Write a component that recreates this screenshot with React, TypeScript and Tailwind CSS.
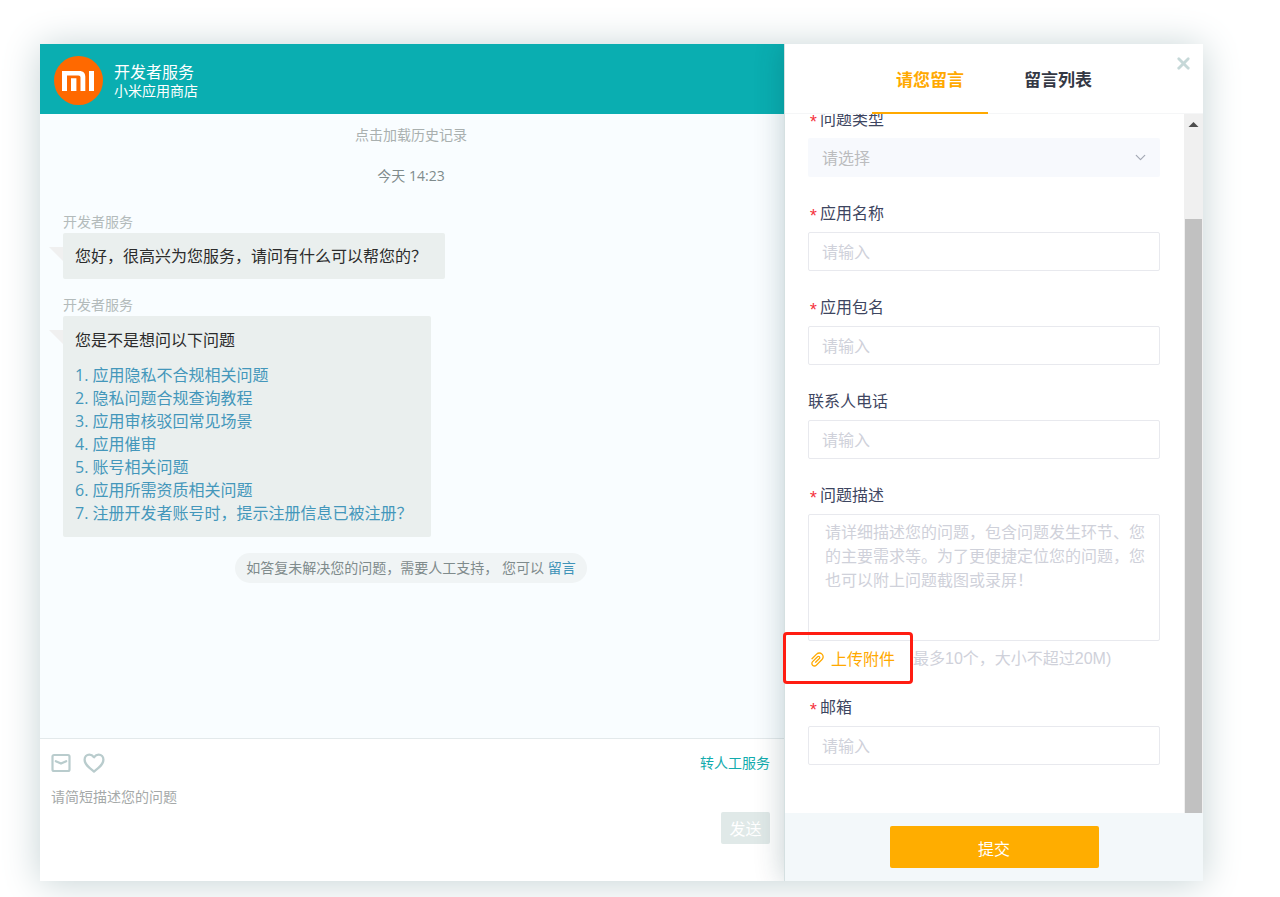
import React from "react"
import { ChevronDown, X } from "lucide-react"
import { AiOutlinePaperClip } from "react-icons/ai"

const questions = [
  "应用隐私不合规相关问题",
  "隐私问题合规查询教程",
  "应用审核驳回常见场景",
  "应用催审",
  "账号相关问题",
  "应用所需资质相关问题",
  "注册开发者账号时，提示注册信息已被注册？",
]

const MiLogo = () => (
  <svg width="49" height="49" viewBox="0 0 49 49" aria-hidden="true">
    <circle cx="24.5" cy="24.5" r="24.5" fill="#ff6900" />
    <path
      fill="#fff"
      d="M8 15h17.5c3.7 0 5.8 2.1 5.8 5.8V35h-4.8V21.6c0-1.5-.7-2.2-2.2-2.2H13V35H8zM17 22.2h5.4V35H17zM35 15h5v20h-5z"
    />
  </svg>
)

const MailIcon = () => (
  <svg width="20" height="20" viewBox="0 0 20 20" fill="none" stroke="#b9cccd" strokeWidth="2.2">
    <rect x="1.5" y="2" width="17" height="16" rx="1.5" />
    <path d="M4.8 8.2L10 10.6l5.2-2.4" strokeLinecap="round" strokeLinejoin="round" />
  </svg>
)

const HeartIcon = () => (
  <svg width="22" height="20" viewBox="0 0 22 20" fill="none" stroke="#b9cccd" strokeWidth="2.3">
    <path
      d="M11 4.2C9.6 2.4 8.1 1.6 6.4 1.6c-2.8 0-4.8 2.2-4.8 5.1 0 4.8 4.7 8 9.4 11.8 4.7-3.8 9.4-7 9.4-11.8 0-2.9-2-5.1-4.8-5.1-1.7 0-3.2.8-4.6 2.6z"
      strokeLinejoin="round"
    />
  </svg>
)

const Message = ({ children }: { children: React.ReactNode }) => (
  <div className="flex flex-col items-start">
    <p className="text-sm leading-[22px] text-[#b3bbbb]">开发者服务</p>
    <div className="relative rounded-xs bg-[#eaefee] py-3 pr-[18px] pl-3 text-base leading-[22px] text-[#2b2b2b]">
      <svg className="absolute top-3.5 -left-3.5" width="14" height="14" viewBox="0 0 14 14">
        <path d="M0 0h14v14z" fill="#f0f0f0" />
      </svg>
      {children}
    </div>
  </div>
)

const Label = ({ id, text, required }: { id: string; text: string; required?: boolean }) => (
  <label htmlFor={id} className="mb-[7px] flex h-6 gap-0.5 leading-6 text-[#3d4560]">
    {required && (
      <span className="w-2.5 font-['Liberation_Mono',monospace] text-lg leading-8 text-[#f5323d]">*</span>
    )}
    {text}
  </label>
)

const TextField = ({ id, text, required }: { id: string; text: string; required?: boolean }) => (
  <div>
    <Label id={id} text={text} required={required} />
    <input
      id={id}
      type="text"
      placeholder="请输入"
      className="block h-[39px] w-full rounded-xs border border-[#e8e9ee] px-[13px] outline-none placeholder:text-[#cfd1da]"
    />
  </div>
)

const ChatPane = () => {
  return (
    <main className="flex min-w-0 flex-1 flex-col">
      <header className="flex h-[70px] items-center gap-[11px] bg-[#0aaeb1] pt-0.5 pl-3.5 text-white">
        <MiLogo />
        <div className="pt-0.5">
          <h1 className="text-base leading-5">开发者服务</h1>
          <p className="text-sm leading-[18px]">小米应用商店</p>
        </div>
      </header>

      <section className="flex-1 bg-[#f9fdff] pt-2.5 pr-0.5 pb-6 pl-[23px]">
        <div className="-ml-[23px] flex flex-col items-center gap-[19px] text-sm leading-[22px]">
          <button className="text-[#a9b0af]">点击加载历史记录</button>
          <p className="text-[#7f8b8c]">今天 14:23</p>
        </div>
        <div className="mt-6 flex flex-col gap-[15px]">
          <Message>您好，很高兴为您服务，请问有什么可以帮您的？</Message>
          <Message>
            <p className="mb-3 leading-6">您是不是想问以下问题</p>
            <ol className="leading-[23px] text-[#4497bb]">
              {questions.map((question, i) => (
                <li key={question}>
                  <a href="#">
                    {i + 1}. {question}
                  </a>
                </li>
              ))}
            </ol>
          </Message>
        </div>
        <div className="mt-4 -ml-[23px] flex justify-center">
          <p className="rounded-full bg-[#f0f4f5] px-[11px] text-sm leading-[30px] text-[#7f8b8c]">
            如答复未解决您的问题，需要人工支持， 您可以{" "}
            <a href="#" className="text-[#3f93b8]">
              留言
            </a>
          </p>
        </div>
      </section>

      <footer className="h-[143px] border-t border-[#e3e9eb] bg-white pt-[13px] pr-3.5 pl-[11px]">
        <div className="flex h-[22px] items-center gap-3 text-sm">
          <button aria-label="消息">
            <MailIcon />
          </button>
          <button aria-label="评价">
            <HeartIcon />
          </button>
          <button className="ml-auto text-[#12abad]">转人工服务</button>
        </div>
        <textarea
          aria-label="请简短描述您的问题"
          placeholder="请简短描述您的问题"
          className="mt-3 block h-[22px] w-full resize-none text-sm leading-[22px] outline-none placeholder:text-[#a5a9a9]"
        />
        <div className="mt-1 flex justify-end">
          <button className="h-8 w-[49px] rounded-xs bg-[#e0e9e8] pt-0.5 text-white">发送</button>
        </div>
      </footer>
    </main>
  )
}

const MessagePanel = () => {
  return (
    <aside className="relative flex w-[419px] shrink-0 flex-col border-l border-[#d5e0e1] bg-white shadow-[0_0_28px_rgba(0,50,60,0.24)]">
      <header className="relative z-10 flex h-[70px] justify-center gap-3 border-b border-[#f5f6f7] bg-white">
        <button className="-mb-px w-[116px] border-b-2 border-[#ffa900] pt-1 text-[17px] font-bold text-[#ffa900]">
          请您留言
        </button>
        <button className="-mb-px w-[116px] border-b-2 border-transparent pt-1 text-[17px] font-bold text-[#343844]">
          留言列表
        </button>
        <button aria-label="关闭" className="absolute top-2.5 right-2.5 text-[#c6d8d8]">
          <X size={19} strokeWidth={3.5} />
        </button>
      </header>

      <div className="flex flex-1">
        <form id="message-form" className="-mt-[7px] flex flex-1 flex-col gap-6 pr-6 pb-12 pl-[23px]">
          <div>
            <Label id="type" text="问题类型" required />
            <div className="relative">
              <select
                id="type"
                className="block h-[39px] w-full appearance-none rounded-xs bg-[#f7f9fd] px-3.5 text-[#bbbcbe] outline-none"
              >
                <option>请选择</option>
              </select>
              <ChevronDown
                size={17}
                strokeWidth={1.7}
                color="#a3a8b4"
                className="pointer-events-none absolute top-[11px] right-[11px]"
              />
            </div>
          </div>
          <TextField id="app-name" text="应用名称" required />
          <TextField id="package-name" text="应用包名" required />
          <TextField id="phone" text="联系人电话" />
          <div>
            <Label id="description" text="问题描述" required />
            <textarea
              id="description"
              placeholder="请详细描述您的问题，包含问题发生环节、您的主要需求等。为了更便捷定位您的问题，您也可以附上问题截图或录屏！"
              className="block h-[127px] w-full resize-none rounded-xs border border-[#e8e9ee] pt-[5px] pr-1.5 pl-4 leading-6 outline-none placeholder:text-[#cfd1da]"
            />
            <div className="relative mt-1.5 flex h-6 items-center">
              <button type="button" className="flex w-[105px] items-center gap-1 text-[#ffa900]">
                <AiOutlinePaperClip size={19} />
                上传附件
              </button>
              <span className="font-['Liberation_Sans','Noto_Sans_CJK_SC',sans-serif] text-[#cfd1da]">
                最多10个，大小不超过20M)
              </span>
              <div className="pointer-events-none absolute -top-[15px] -left-[25px] h-[52px] w-[130px] rounded-sm border-3 border-[#ff1d12]" />
            </div>
          </div>
          <TextField id="email" text="邮箱" required />
        </form>
        <div className="flex w-[19px] flex-col bg-[#f0f0f0]">
          <svg width="19" height="105" viewBox="0 0 19 105" aria-hidden="true">
            <path d="M4.5 13l5-5 5 5z" fill="#4d4d4d" />
          </svg>
          <div className="mx-px flex-1 bg-[#c1c1c1]" />
        </div>
      </div>

      <footer className="flex h-[68px] justify-center bg-[#f3f8fa] pt-[13px]">
        <button form="message-form" className="h-[42px] w-1/2 rounded-xs bg-[#ffad00] pt-1 text-white">
          提交
        </button>
      </footer>
    </aside>
  )
}

export default function App() {
  return (
    <div className="flex min-h-screen bg-white pt-11 pr-[77px] pb-4 pl-10 font-['Open_Sans','Noto_Sans_CJK_SC',sans-serif] text-base">
      <div className="flex flex-1 overflow-hidden bg-white shadow-[0_2px_36px_#c4d2d4]">
        <ChatPane />
        <MessagePanel />
      </div>
    </div>
  )
}
